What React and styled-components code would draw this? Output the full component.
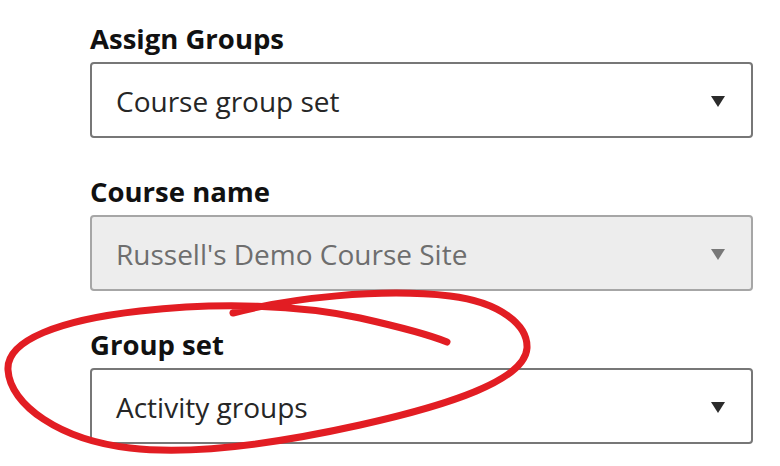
import React from 'react'
import styled, { createGlobalStyle } from 'styled-components'

const GlobalStyle = createGlobalStyle`
  html, body {
    margin: 0;
    padding: 0;
    background: #ffffff;
  }
  body {
    font-family: "Open Sans", "Noto Sans", sans-serif;
  }
`;

const Page = styled.div`
  position: relative;
  width: 780px;
  height: 466px;
  overflow: hidden;
  box-sizing: border-box;
  padding: 22px 27px 0 90px;
  display: flex;
  flex-direction: column;
  gap: 37px;
`;

const Field = styled.div`
  display: flex;
  flex-direction: column;
  gap: 6px;
`;

const Label = styled.div`
  font-size: 27.5px;
  line-height: 34px;
  font-weight: 700;
  color: #111;
`;

const SelectBox = styled.div`
  height: 76px;
  box-sizing: border-box;
  display: flex;
  align-items: center;
  justify-content: space-between;
  padding: 2px 26px 0 24px;
  border: 2px solid ${props => props.disabled ? '#a6a6a6' : '#777'};
  border-radius: 4px;
  background: ${props => props.disabled ? '#ededed' : '#fff'};
`;

const Value = styled.span`
  font-size: 28px;
  color: ${props => props.disabled ? '#6e6e6e' : '#262626'};
`;

const Caret = styled.span`
  width: 0;
  height: 0;
  border-left: 7.5px solid transparent;
  border-right: 7.5px solid transparent;
  border-top: 11px solid ${props => props.disabled ? '#787878' : '#2b2b2b'};
`;

const Annotation = styled.svg`
  position: absolute;
  left: 0;
  top: 0;
  pointer-events: none;
`;

const fields = [
  { label: 'Assign Groups', value: 'Course group set' },
  { label: 'Course name', value: "Russell's Demo Course Site", disabled: true },
  { label: 'Group set', value: 'Activity groups' },
];

const App = () => {
  return (
    <>
      <GlobalStyle />
      <Page>
        {fields.map(f => (
          <Field key={f.label}>
            <Label>{f.label}</Label>
            <SelectBox disabled={f.disabled}>
              <Value disabled={f.disabled}>{f.value}</Value>
              <Caret disabled={f.disabled} />
            </SelectBox>
          </Field>
        ))}
        <Annotation width="780" height="466" viewBox="0 0 780 466">
          <path
            d="M233,313 C290,298 380,288 450,296 C500,302 528,325 527,348 C525,380 450,405 360,425 C270,445 190,455 130,448 C60,440 10,405 8,370 C6,340 60,320 140,311 C220,302 300,305 360,318 C400,327 430,335 447,342"
            fill="none"
            stroke="#e21d23"
            strokeWidth="7"
            strokeLinecap="round"
            strokeLinejoin="round"
          />
        </Annotation>
      </Page>
    </>
  )
}

export default App
